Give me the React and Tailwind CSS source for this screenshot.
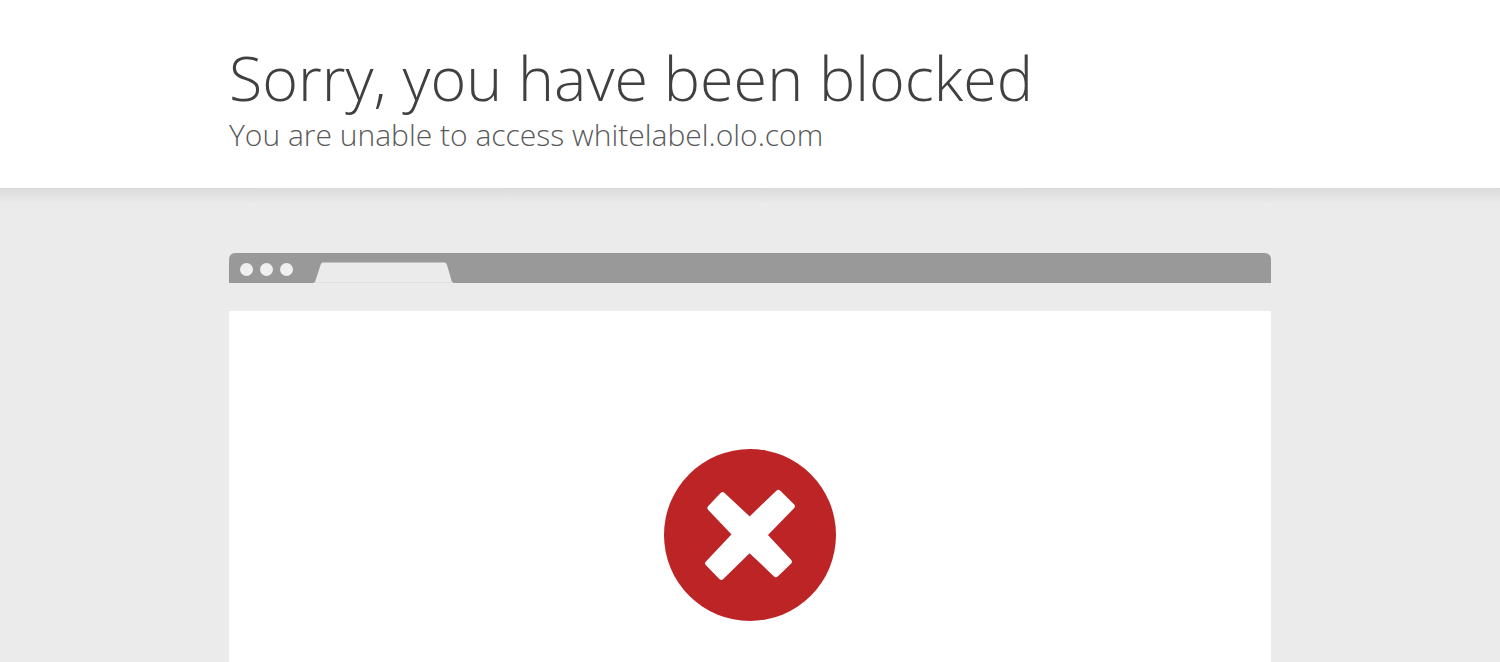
function BrowserBar() {
  return (
    <div className="flex h-[30px] items-end overflow-hidden rounded-t-md bg-[#999999]">
      <div className="flex gap-[7px] self-center pt-[3px] pl-[11px]">
        <span className="size-[13px] rounded-full bg-[#f0f0f0]" />
        <span className="size-[13px] rounded-full bg-[#f0f0f0]" />
        <span className="size-[13px] rounded-full bg-[#f0f0f0]" />
      </div>
      <svg className="ml-5 h-[21px] w-[141px]" viewBox="0 0 141 21" aria-hidden="true">
        <path
          d="M0 21 C1.5 21 2 20 2.5 18.5 L7.5 3 C8.1 1 8.9 0.5 11 0.5 H130.5 C132.5 0.5 133.4 1 134 3 L138.5 18.5 C139 20 139.5 21 141 21 Z"
          fill="#ebebeb"
        />
        <path d="M2 20.5 H139" stroke="#e0e0e0" strokeWidth="1" />
      </svg>
    </div>
  );
}

function BlockedIcon() {
  return (
    <svg className="size-[172px]" viewBox="27 27 516 516" role="img" aria-label="Blocked">
      <circle cx="285" cy="285" r="258" fill="#bd2426" />
      <path
        d="M203 165 L284 241 L370 158 L411 199 L327 285 L402 365 L363 403 L284 328 L199 411 L159 370 L241 283 L166 204 Z"
        fill="#ffffff"
        stroke="#ffffff"
        strokeWidth="17"
        strokeLinejoin="round"
      />
    </svg>
  );
}

export default function App() {
  return (
    <div className="flex min-h-screen flex-col bg-[#ebebeb] font-['Open_Sans','Noto_Sans',sans-serif] font-light">
      <header className="bg-white pt-[42px] pb-8">
        <div className="mx-auto w-full max-w-[1042px]">
          <h1 className="text-[61px] leading-[72px] text-[#404040]">Sorry, you have been blocked</h1>
          <h2 className="text-[30px] leading-[42px] text-[#595959]">You are unable to access whitelabel.olo.com</h2>
        </div>
      </header>

      <main className="flex flex-1 flex-col bg-linear-to-b from-[#dcdcdc] to-[#ebebeb] to-[16px] pt-[65px]">
        <div className="mx-auto flex w-full max-w-[1042px] flex-1 flex-col">
          <BrowserBar />
          <div className="mt-7 flex flex-1 justify-center bg-white pt-[138px] pb-10">
            <BlockedIcon />
          </div>
        </div>
      </main>
    </div>
  );
}
